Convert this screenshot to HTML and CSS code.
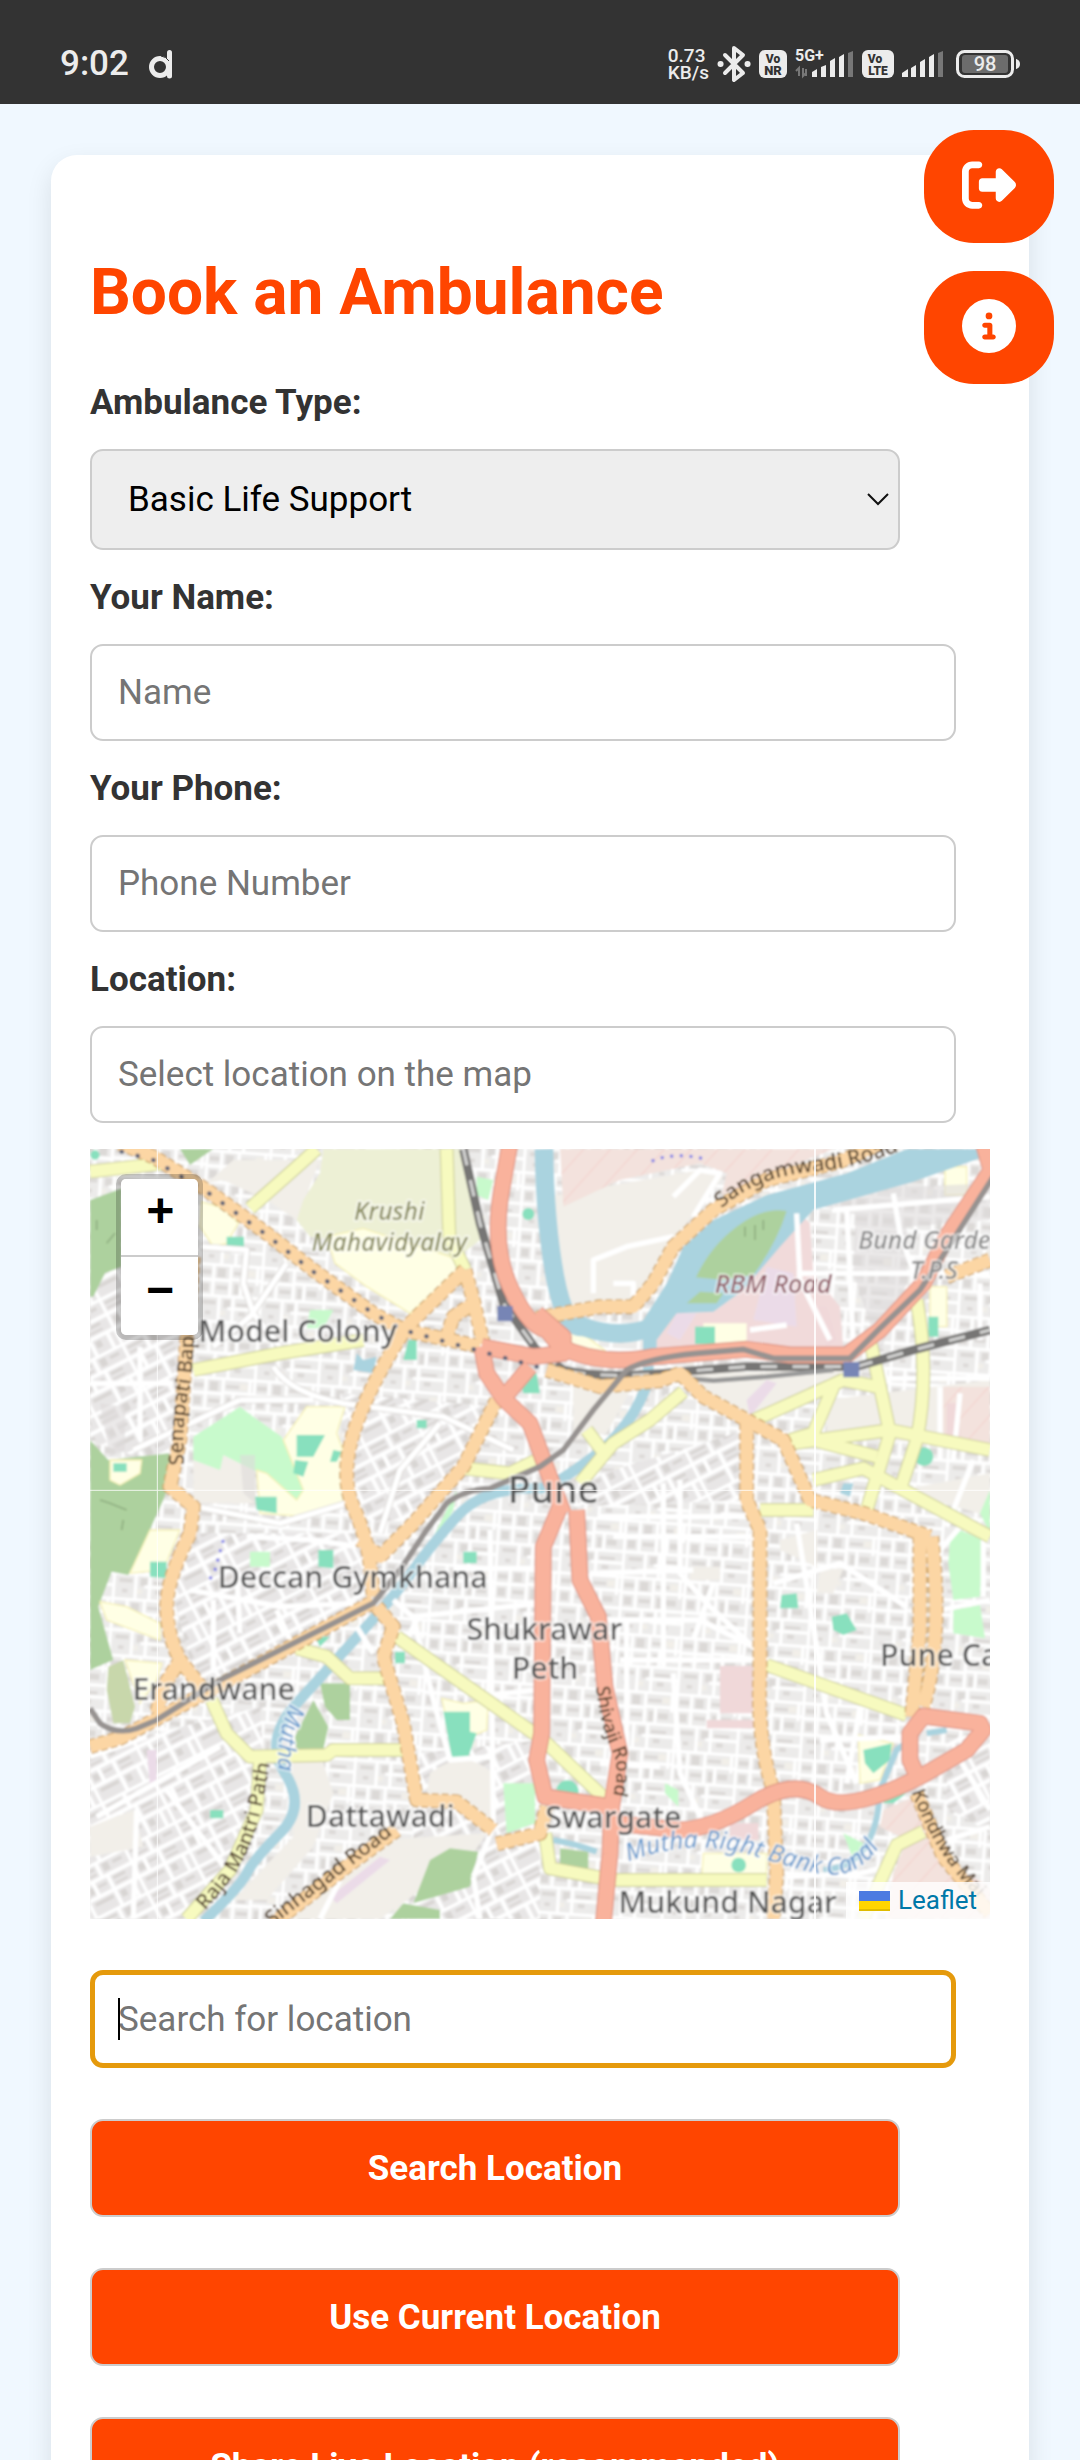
FILE: index.html
```html
<!DOCTYPE html>
<html lang="en">
<head>
<meta charset="utf-8">
<meta name="viewport" content="width=device-width, initial-scale=1">
<title>Book an Ambulance</title>
<link rel="stylesheet" href="styles.css">
</head>
<body>
<div class="screen">
  <header class="status">
    <div class="status-left">
      <span class="clock">9:02</span>
      <svg class="app-mark" width="24" height="30" viewBox="0 0 24 30" aria-hidden="true">
        <circle cx="11" cy="18" r="8.5" fill="none" stroke="#ececec" stroke-width="5"/>
        <path d="M20.500 3.500V27" stroke="#ececec" stroke-width="5" stroke-linecap="round"/>
        <path d="M12 7q5 .5 8 5" stroke="#333" stroke-width="1" fill="none"/>
      </svg>
    </div>
    <div class="status-right">
      <span class="speed">0.73<br>KB/s</span>
      <svg width="34" height="38" viewBox="0 0 34 38" fill="none" stroke="#ececec" stroke-width="4" stroke-linejoin="round" stroke-linecap="round" aria-hidden="true">
        <path d="M8 10L26 28L17 35V3L26 10L8 28"/>
        <path d="M3.500 19h.1M30.500 19h.1" stroke-width="6"/>
      </svg>
      <svg class="badge-icon" width="28" height="28" viewBox="0 0 28 28" aria-hidden="true">
        <rect width="28" height="28" rx="6" fill="#ececec"/>
        <text x="14" y="13" text-anchor="middle" font-size="12">Vo</text>
        <text x="14" y="25" text-anchor="middle" font-size="13">NR</text>
      </svg>
      <svg class="net" width="59" height="30" viewBox="0 0 59 30" aria-hidden="true">
        <text x="0" y="12" font-size="16">5G+</text>
        <path d="M4 27v-8l-3 3M8 19v8l3-3M11 20v7" stroke="#777" stroke-width="2" fill="none"/>
        <path d="M17 28v-5l5-3v8zM26 28v-10l5-2v12zM35 28V12l5-3v19zM44 28V8l5-3v23z" fill="#ececec"/>
        <path d="M53 28V4l5-2v26z" fill="#777"/>
      </svg>
      <svg class="badge-icon" width="32" height="28" viewBox="0 0 32 28" aria-hidden="true">
        <rect width="32" height="28" rx="6" fill="#ececec"/>
        <text x="13" y="13" text-anchor="middle" font-size="12">Vo</text>
        <text x="16" y="25" text-anchor="middle" font-size="12">LTE</text>
      </svg>
      <svg width="42" height="28" viewBox="0 0 42 28" aria-hidden="true">
        <path d="M0 27v-4l6-4v8zM9 27v-9l5-3v12zM18 27V12l5-3v18zM27 27V7l5-3v23z" fill="#ececec"/>
        <path d="M36 27V3l5-2v26z" fill="#777"/>
      </svg>
      <svg class="battery" width="66" height="28" viewBox="0 0 66 28" aria-hidden="true">
        <rect x="1.500" y="1.500" width="55" height="25" rx="7" fill="none" stroke="#ececec" stroke-width="3"/>
        <rect x="6" y="5" width="46" height="18" rx="3" fill="#6c6c6c"/>
        <path d="M60 9q4 1 4 5t-4 5z" fill="#ececec"/>
        <text x="29" y="21" text-anchor="middle" font-size="20">98</text>
      </svg>
    </div>
  </header>

  <main class="page">
    <div class="card">
      <h1>Book an Ambulance</h1>
      <form>
        <label for="type">Ambulance Type:</label>
        <div class="select-wrap">
          <select id="type"><option>Basic Life Support</option><option>Advanced Life Support</option></select>
          <svg class="chevron" width="22" height="14" viewBox="0 0 22 14" fill="none" stroke="#111" stroke-width="2" aria-hidden="true"><path d="M1 1l10 10L21 1"/></svg>
        </div>
        <label for="name">Your Name:</label>
        <input id="name" type="text" placeholder="Name">
        <label for="phone">Your Phone:</label>
        <input id="phone" type="tel" placeholder="Phone Number">
        <label for="location">Location:</label>
        <input id="location" type="text" placeholder="Select location on the map">

        <div class="map">
          <svg class="tiles" viewBox="30 27 2700 2310" preserveAspectRatio="xMidYMid slice" role="img" aria-label="Map of Pune">
            <defs>
              <filter id="soft" x="0" y="0" width="100%" height="100%"><feGaussianBlur stdDeviation="3"/></filter>
              <pattern id="blocks" width="190" height="170" patternUnits="userSpaceOnUse" patternTransform="rotate(4)">
                <rect width="190" height="170" fill="#ecebea"/>
                <path d="M12 20h30v14H12zM60 14h24v28H60zM108 22h40v10h-40zM14 62h22v24H14zM58 66h34v12H58zM112 60h14v30h-14zM140 64h30v18h-30zM20 112h40v12H20zM84 108h20v24H84zM122 116h46v10h-46zM30 144h16v10H30zM130 142h20v12h-20z" fill="#dcd9d7"/>
                <path d="M66 142h24v14H66zM150 16h24v20h-24z" fill="#f2efe9"/>
                <path d="M0 4H190M0 50H102M0 98H190M96 134H190M4 0V170M48 0V98M100 0V98M112 98V170M70 98V170M132 50V98M102 46H190M180 0V60" stroke="#fff" stroke-width="10" fill="none"/>
              </pattern>
              <pattern id="blocksB" width="170" height="150" patternUnits="userSpaceOnUse" patternTransform="rotate(-27)">
                <rect width="170" height="150" fill="#e8e6e6"/>
                <path d="M14 16h50v8H14zM14 34h50v6H14zM90 14h20v24H90zM124 18h30v10h-30zM16 66h20v20H16zM50 68h30v8H50zM104 62h40v10h-40zM104 82h40v6h-40zM20 112h60v10H20zM104 112h18v20h-18z" fill="#d8d5d3"/>
                <path d="M0 4H170M0 52H170M0 100H170M76 0V52M42 52V100M92 52V150M4 0V150M150 100V150" stroke="#fff" stroke-width="12" fill="none"/>
              </pattern>
              <pattern id="hatch" width="60" height="60" patternUnits="userSpaceOnUse" patternTransform="rotate(42)">
                <rect width="60" height="60" fill="#f3e2dd"/><path d="M0 0V60" stroke="#f3cfca" stroke-width="5"/>
              </pattern>
              <path id="p-senapati" d="M312 975Q305 860 325 760T345 480"/>
              <path id="p-sangam" d="M1925 205Q2030 110 2200 95T2560 -10"/>
              <path id="p-raja" d="M375 2312Q500 2180 530 2060T575 1840"/>
              <path id="p-sinhagad" d="M575 2360L930 2090"/>
              <path id="p-shivaji" d="M1548 1640Q1560 1760 1595 1830T1580 2020"/>
              <path id="p-kondhwa" d="M2495 1955Q2560 2140 2700 2280"/>
              <path id="p-mutha" d="M630 1690Q580 1800 598 1950"/>
              <path id="p-canal" d="M1645 2165Q1840 2090 2030 2150T2260 2205Q2370 2200 2430 2060"/>
              <path id="streets" d="M620 370L510 530L400 620M360 320L500 330L490 430L520 520L600 620M580 680Q630 760 790 790L1090 830L1300 930M480 780H700M160 930L480 780M350 1100L600 1150L800 1090M1080 850L960 990L900 1180"/>
              <path id="tertiary" d="M30 95L250 70M510 205L640 90L710 27M1100 27L1108 290L1155 390M340 690L600 640L850 600M1500 1030L1600 910L1710 840L1810 755M2000 850L2290 720L2390 740M2370 600L2430 880L2360 1110M2510 480Q2550 700 2510 900L2460 1050M2140 910L2430 870L2730 930M2130 900L2200 880L2260 740M2200 900L2390 950M2200 1020L2350 985L2730 1190M2040 1110H2200M1520 870L1580 950M650 1525L740 1550L810 1615H920M395 1680L440 1780L510 1850L740 1845L760 1830H980M540 1860L530 2010L450 2190L320 2337M950 1490L1390 1800L1590 1990M1395 2080L1410 2185L1600 2220H2060M2060 1575L2480 1725M2350 2337L2450 2115L2530 2075M1150 985L1290 1000L1390 950"/>
              <path id="rail" d="M1150 27L1200 250L1270 490L1370 630L1450 690Q1580 720 1800 695L2000 680H2330L2500 630L2730 570"/>
              <path id="secondary" d="M120 10L220 50L380 150L560 280L700 390L880 520L970 570L1200 620M340 350L320 600L300 900L270 1040L340 1100L330 1180Q260 1320 260 1400T300 1560L370 1650M300 1560L250 1640L230 1720M30 1820L120 1795L420 1635L880 1385M1155 390L980 560Q860 750 820 880T820 1100T870 1270L880 1370M1155 390L1180 480L1210 610M1100 590L1120 530L1180 490M1250 780L1150 980L1000 1150L900 1250L840 1200M890 1400L940 1460L910 1550L970 1750L1010 1980L1130 1985L1240 2070M1250 2112L1380 2080L1400 2000M1370 535L1560 500L1660 500L1720 430L1780 320L1900 210L2060 120L2280 65L2400 10M1400 690L1560 740L1740 722L1800 700L1870 770L2000 840L2110 900L2190 1080L2350 1120L2550 1190M2520 1190V1470L2495 1730M2555 1190Q2590 1500 2530 1700M2000 850V1080L2040 1170V1600Q2030 1800 2080 1950L2090 2200L2080 2337M2600 410L2730 360M950 2070L800 2180L580 2350M2510 1960L2590 2150L2730 2320"/>
              <path id="primary" d="M1290 10L1265 150Q1235 320 1290 440T1400 570L1440 620Q1560 680 1720 650L2000 628L2130 645H2300L2400 570L2530 430L2600 290L2740 80M1205 620L1360 650L1450 640L1450 590L1370 520M1205 620L1220 700L1270 775L1350 680M1270 775L1350 850L1390 960L1450 1120M1440 1100L1390 1220L1385 1780L1370 1860L1395 1970L1590 2000M1490 1110L1500 1320L1555 1430L1575 1640L1620 1840L1595 2000L1590 2140L1570 2350M1610 2050L1800 2070Q1900 2065 2020 1990T2220 1970T2530 1905L2660 1830L2710 1770L2700 1750L2530 1728L2490 1780V1860L2510 1905M2710 10L2730 80"/>
            </defs>
            <g filter="url(#soft)">
              <rect x="0" y="0" width="2760" height="2360" fill="url(#blocks)"/>
              <g fill="url(#blocksB)">
                <path d="M30 400L350 380L300 1000L30 900zM230 1180L840 1180L880 1380L350 1640zM30 1830L540 1700L560 2000L330 2337H30zM1020 1840L1380 1800V2337H980zM780 760L1250 800L1000 1140L810 1150z"/>
                <path d="M2600 1800L2730 1770V2080L2600 2000zM1500 1020L2000 870V1080L1480 1100z"/>
              </g>
              <g fill="#f2efe9">
                <path d="M1400 170L1860 90L1930 110L1780 300L1700 480L1460 530z"/>
                <path d="M340 960L430 940H520L530 1090L340 1090zM1790 700L2300 690L2000 830zM2240 780L2730 720V920L2240 890zM2460 1050L2730 1000V1130z"/>
                <path d="M630 1870L720 1840L760 1960L700 2120L560 2280H460L640 2090zM900 2100L1220 2080L1180 2140L900 2337H640zM1050 1900Q1150 1820 1240 1900V2040L1040 1960z"/>
                <path d="M1480 700H1680L1580 880L1480 900zM30 2060L160 2010L190 2120L30 2150zM2220 1290L2290 1285L2260 1360H2210zM1830 1280H1920V1320H1830zM2100 1200L2210 1170V1280L2100 1230z"/>
                <path d="M380 130L460 60H720L650 240L560 180L430 120z"/>
              </g>
              <!-- woods, parks, grounds -->
              <g fill="#add19e">
                <path d="M30 180L125 145V380L75 400L40 470H30zM300 27H400L330 75zM30 900L85 960L265 940L290 970L250 1080L205 1180L145 1305L95 1295L55 1400L100 1560L30 1590z"/>
                <path d="M1050 2160L1110 2125L1195 2135L1170 2240L1000 2290zM930 2337L970 2290L1080 2310V2337zM1440 2125L1525 2135V2185L1440 2180zM720 1630H810V1740H770L735 1700zM645 1790L700 1680L745 1760L730 1830L650 1830z"/>
              </g>
              <path d="M85 1580L130 1560L165 1700L150 1750H100L80 1650z" fill="#c8d7ab"/>
              <path d="M730 27H1160L1200 300L1110 370L1000 350L770 300L690 290L650 240L670 180L720 100z" fill="#edf0d5"/>
              <g fill="#c8facc">
                <path d="M340 890L480 800L520 830L605 890L675 1050L655 1085L560 1010L430 945L420 990L340 960zM690 510H760L730 565H680zM510 1235H570V1280H510zM1190 110L1240 120L1225 180L1190 165z"/>
                <path d="M1270 1930H1365V2050L1280 2080zM2610 1200L2640 1170L2710 1200L2700 1370L2620 1380L2605 1270zM2620 1410L2700 1395L2715 1495L2620 1480zM1755 1930L1795 1950V2000L1755 1960zM2290 2080L2350 2110L2320 2160zM2700 1120L2730 1050V1180zM1120 1110L1080 1180L1060 1190L1130 1050z"/>
              </g>
              <g fill="#ffffe5" stroke="#f5f0b5" stroke-width="4">
                <path d="M365 185L430 205L475 250L440 310L400 320L360 260zM740 290L850 265L1110 350L1150 380L990 520L860 440L765 370zM680 800H795L770 880L800 960L795 1090L680 1130L540 1120L530 990L560 1000L650 1080L670 1050L610 900z"/>
                <path d="M210 1170H300L250 1290L150 1300zM1085 1675L1150 1690L1225 1680L1220 1770L1170 1790L1095 1720zM1870 2140H2060V2210H1865zM1870 550H2000V610H1870zM2595 80H2660V165H2595zM2550 440H2600V560H2550zM2335 1785L2440 1810L2400 1920L2340 1930zM1430 570L1520 590L1600 650L1450 620z"/>
                <path d="M90 960L185 960L180 1000L120 1035L90 1020zM60 1385L140 1400L240 1450V1500L80 1440zM135 1560L245 1570L230 1620L180 1690z"/>
              </g>
              <g fill="#88e0be">
                <path d="M650 885L735 885L700 950L650 950zM645 960L685 965L670 1010L640 1000zM525 1070H590V1120L530 1110zM100 970H140V995H100zM440 290H492V325H440zM210 1265H260V1315L210 1310zM715 1230H760V1285L715 1280zM985 600H1010V660H970z"/>
                <path d="M1090 1715H1170V1775L1190 1780L1165 1850H1115zM1845 560H1905V612H1845zM2545 530H2575V590H2545zM2105 1365L2150 1360L2155 1405H2100zM2255 1430L2300 1420L2330 1470L2290 1485L2260 1470zM2350 1830L2435 1810L2430 1860L2380 1900L2355 1870zM1150 1235H1190V1270H1150zM945 1535H975V1570H945zM760 930L785 935L770 965H750zM1010 840H1040V865H1010zM1320 720L1370 700L1380 760L1330 760zM390 2010H430V2035H390zM705 1490H750L720 1520zM2410 1970L2480 1960L2440 1990H2410z"/>
                <circle cx="1462" cy="1955" r="34"/><circle cx="1976" cy="2175" r="22"/><circle cx="2532" cy="950" r="28"/><circle cx="45" cy="45" r="14"/><circle cx="1345" cy="222" r="18"/>
              </g>
              <path d="M1440 27H2260L1925 165L1940 100L1860 70L1620 120L1450 200z" fill="url(#hatch)"/>
              <path d="M2410 2010L2500 1970L2640 2190L2730 2240V2337H2420L2440 2200L2480 2100L2400 2060zM2590 740H2730V920L2590 880z" fill="url(#hatch)"/>
              <path d="M2170 230L2080 330L1990 450L1900 515L1770 520L1715 630H2290L2280 500L2200 400L2190 250z" fill="#f1dada"/>
              <path d="M2060 380L2140 400L2150 560L2020 540zM1790 520H1850L1800 600L1760 580zM200 1830H230V1930L210 1940zM750 2270L900 2150L930 2160L770 2290zM2000 780L2060 720L2090 730L2010 830z" fill="#ebdbe8"/>
              <path d="M1920 1578H2018V1720H1920zM1880 1740H2020V1765H1880zM2210 500H2240L2270 600L2240 620zM1950 2050H2035V2100H1950zM2600 790H2640V890H2600z" fill="#f0d8d9"/>
              <path d="M1870 550H2000V610H1870z" fill="#ffffe5"/><path d="M1845 560H1905V612H1845z" fill="#88e0be"/>
              <path d="M2330 150L2480 100V430L2400 640L2320 400zM2060 160L2730 130V240L2480 260zM480 945H525V1090L490 1060zM60 790L135 800V930L90 950z" fill="#dddbda" opacity=".6"/>
              <!-- river -->
              <g fill="none" stroke="#aad3df">
                <path d="M1392 27Q1395 250 1425 410T1510 560Q1620 600 1720 560" stroke-width="56"/>
                <path d="M1705 580V720Q1660 860 1540 950T1380 1045Q1210 1040 1130 1130T1000 1290T850 1470T650 1690T615 1900T600 2080T500 2200T370 2345" stroke-width="32"/>
                <path d="M1420 2100Q1480 2110 1550 2135M2230 2190Q2390 2180 2400 1950L2450 1830L2490 1800M2540 1780L2600 1770" stroke-width="18"/>
              </g>
              <path d="M1690 630V540L1760 430L1810 320L1900 240L2060 165L2300 100L2480 27H2700V55L2500 125L2200 210L2100 320L1990 450L1900 515L1790 520L1730 600V640zM830 640L850 660L890 650L880 700L820 690zM2290 1030H2320L2310 1070L2280 1060z" fill="#aad3df"/>
              <path d="M1848 412Q1890 320 1970 260T2120 213Q2090 310 2020 405L1930 420zM1820 490L1860 455L1930 460L1910 490z" fill="#add19e"/>
              <path d="M1995 290V260M2025 300V255M2050 270V240M50 270V240M80 310L105 280M60 1080L90 1090L140 1110M130 1140L125 1170" fill="none" stroke="#8fae80" stroke-width="5"/>
              <!-- residential streets -->
              <g fill="none" stroke-linejoin="round">
                <use href="#streets" stroke="#dad7d4" stroke-width="21"/>
                <use href="#streets" stroke="#fff" stroke-width="16"/>
              </g>
              <g fill="none" stroke="#fff" stroke-width="16" stroke-linejoin="round">
                <path d="M30 730H280M180 620V900M30 1850L200 1790M50 2030L420 1820M170 2010L160 2337M260 1950L440 2190M330 1350L600 1400L830 1390M500 1190L700 1200L830 1220M400 1380L400 1600M590 1410L630 1500M470 1290L480 1480"/>
                <path d="M1000 1430L1060 1680L1110 1860L1240 1850M1230 1170L1240 2060L1180 2210M1000 1430L1380 1390M1180 1670L1370 1650M1120 1285H1370M940 1380L1010 1440L980 1500M880 1540L830 1460"/>
                <path d="M1800 1020V1300L1890 1400L2040 1540M1600 1190H2030M1750 1030V1580M1900 1330L1840 1500M1560 1440H1860L2040 1530M1620 1560H2040M1640 1440V1880M1530 1300L1840 1290M1780 1600L1800 1900L1870 2050M1560 1130H2000M1560 1870L1740 1880M2080 1330L2280 1270L2480 1400M2150 1150L2210 1520L2240 1720L2330 1930M2220 1800L2480 1790M2580 1410L2730 1380M2300 1930L2340 1700M2710 1200V1370M2580 1230L2650 1150"/>
                <path d="M1540 460V360L1640 320L1780 290M1600 430H1660V490M1780 170L1860 90L1920 100L1840 230M2010 570L2120 555M2150 400H2730M2300 200L2320 620M2440 160L2460 280L2520 450M2260 210L2730 170M2700 430V600M2420 715H2730M2580 740V960M2640 760L2620 960M2680 960L2600 1160M2150 220L2160 420L2250 600M720 2337L780 2220M1200 2337L1180 2210M2120 2210L2340 2200L2420 2180M2600 2100L2730 2060M2640 1860L2730 2010"/>
              </g>
              <!-- tertiary roads -->
              <g fill="none" stroke-linejoin="round">
                <use href="#tertiary" stroke="#cfd19b" stroke-width="42"/>
                <use href="#tertiary" stroke="#f7fabf" stroke-width="35"/>
              </g>
              <!-- railway -->
              <g fill="none">
                <use href="#rail" stroke="#777674" stroke-width="26"/>
                <use href="#rail" stroke="#d0d0cf" stroke-width="10" stroke-dasharray="50 46"/>
                <path d="M1820 715L1900 722L2060 710L2260 690" stroke="#999" stroke-width="14"/>
              </g>
              <!-- secondary roads -->
              <g fill="none" stroke-linejoin="round">
                <use href="#secondary" stroke="#c79f62" stroke-width="45" stroke-dasharray="20 10"/>
                <use href="#secondary" stroke="#fcd6a4" stroke-width="38"/>
              </g>
              <!-- primary roads -->
              <g fill="none" stroke-linejoin="round">
                <use href="#primary" stroke="#dd9483" stroke-width="51"/>
                <use href="#primary" stroke="#f9b29c" stroke-width="44"/>
              </g>
              <!-- metro line -->
              <path d="M30 1705L60 1750Q110 1785 170 1765L230 1740L420 1620L880 1390L960 1290L1040 1170L1100 1090Q1150 1050 1230 1045L1380 980L1450 930L1540 810L1640 690Q1700 655 1850 640L1990 628L2080 655H2310L2400 565L2520 450L2600 330L2740 110" fill="none" stroke="#979391" stroke-width="17"/>
              <path d="M125 35L220 60L380 155L560 285L700 395L880 520L970 570L1370 680" fill="none" stroke="#5d6478" stroke-width="13" stroke-linecap="round" stroke-dasharray="1 48"/>
              <path d="M1715 64Q1780 35 1870 56M430 1200L405 1290L380 1335" stroke="#7a7ae6" stroke-width="9" stroke-dasharray="9 20" fill="none"/>
              <path d="M1252 498h46v46h-46zM2290 666h48v46h-48z" fill="#7785b5"/>
              <g class="roads">
                <text font-size="62"><textPath href="#p-senapati">Senapati Bapat</textPath></text>
                <text font-size="64"><textPath href="#p-sangam">Sangamwadi Road</textPath></text>
                <text font-size="62"><textPath href="#p-raja">Raja Mantri Path</textPath></text>
                <text font-size="64"><textPath href="#p-sinhagad">Sinhagad Road</textPath></text>
                <text font-size="58"><textPath href="#p-shivaji">Shivaji Road</textPath></text>
                <text font-size="58"><textPath href="#p-kondhwa">Kondhwa Main</textPath></text>
              </g>
              <g class="water">
                <text font-size="72"><textPath href="#p-mutha">Mutha</textPath></text>
                <text font-size="74"><textPath href="#p-canal">Mutha Right Bank Canal</textPath></text>
              </g>
              <g class="areas">
                <text x="928" y="240" font-size="74" text-anchor="middle" fill="#8a8c5e">Krushi</text>
                <text x="928" y="333" font-size="74" text-anchor="middle" fill="#8a8c5e">Mahavidyalay</text>
                <text x="2080" y="458" font-size="76" text-anchor="middle" fill="#93616b">RBM Road</text>
                <text x="2335" y="327" font-size="74" fill="#8b8b8b">Bund Garden</text>
                <text x="2562" y="417" font-size="74" text-anchor="middle" fill="#8b8b8b">T.P.S</text>
              </g>
              <g class="places" text-anchor="middle">
                <text x="653" y="605" font-size="91">Model Colony</text>
                <text x="1420" y="1088" font-size="112" fill="#444">Pune</text>
                <text x="818" y="1345" font-size="91">Deccan Gymkhana</text>
                <text x="401" y="1680" font-size="91">Erandwane</text>
                <text x="1393" y="1500" font-size="91">Shukrawar</text>
                <text x="1395" y="1617" font-size="91">Peth</text>
                <text x="901" y="2062" font-size="91">Dattawadi</text>
                <text x="1600" y="2063" font-size="91">Swargate</text>
                <text x="1943" y="2320" font-size="91">Mukund Nagar</text>
                <text x="2400" y="1578" font-size="91" text-anchor="start">Pune Camp</text>
              </g>
            </g>
            <path d="M232 27V2337M30 1051H2730" stroke="#fff" stroke-width="3" opacity=".8"/>
            <path d="M2205 27V2337" stroke="#fff" stroke-width="5"/>
          </svg>
          <div class="zoom">
            <button type="button" aria-label="Zoom in">+</button>
            <button type="button" aria-label="Zoom out">−</button>
          </div>
          <div class="attribution">
            <svg width="31" height="20" viewBox="0 0 31 20" aria-hidden="true"><path fill="#4c7be1" d="M0 0h31v10H0z"/><path fill="#ffd500" d="M0 10h31v10H0z"/><path fill="#e0bc00" d="M0 18h31v2H0z"/></svg>
            <a href="#leaflet">Leaflet</a>
          </div>
        </div>

        <div class="search-wrap">
          <input class="search" type="text" placeholder="Search for location" aria-label="Search for location">
        </div>
        <button class="action" type="button">Search Location</button>
        <button class="action" type="button">Use Current Location</button>
        <button class="action" type="button">Share Live Location (recommended)</button>
      </form>
    </div>
  </main>

  <nav class="floating" aria-label="Quick actions">
    <button type="button" aria-label="Log out">
      <svg width="54" height="54" viewBox="0 0 512 512" fill="#fff" aria-hidden="true"><path d="M377.900 105.900L500.700 228.700c7.200 7.200 11.300 17.100 11.300 27.300s-4.100 20.100-11.300 27.300L377.900 406.100c-6.400 6.400-15 9.900-24 9.900c-18.700 0-33.900-15.200-33.900-33.900l0-62.100-128 0c-17.700 0-32-14.300-32-32l0-64c0-17.700 14.300-32 32-32l128 0 0-62.100c0-18.700 15.200-33.900 33.900-33.900c9 0 17.600 3.600 24 9.900zM160 96L96 96c-17.700 0-32 14.300-32 32l0 256c0 17.700 14.300 32 32 32l64 0c17.700 0 32 14.300 32 32s-14.300 32-32 32l-64 0c-53 0-96-43-96-96L0 128C0 75 43 32 96 32l64 0c17.700 0 32 14.300 32 32s-14.300 32-32 32z"/></svg>
    </button>
    <button type="button" aria-label="Information">
      <svg width="54" height="54" viewBox="0 0 512 512" fill="#fff" aria-hidden="true"><path d="M256 512A256 256 0 1 0 256 0a256 256 0 1 0 0 512zM216 336l24 0 0-64-24 0c-13.300 0-24-10.700-24-24s10.700-24 24-24l48 0c13.300 0 24 10.700 24 24l0 88 8 0c13.300 0 24 10.700 24 24s-10.700 24-24 24l-80 0c-13.300 0-24-10.700-24-24s10.700-24 24-24zm40-208a32 32 0 1 1 0 64 32 32 0 1 1 0-64z"/></svg>
    </button>
  </nav>
</div>
</body>
</html>
```
FILE: styles.css
```css
* { box-sizing: border-box; }

body {
  margin: 0;
  background: #f0f8ff;
  color: #333;
  font-family: Roboto, "Liberation Sans", sans-serif;
  font-size: 35px;
}

button, input, select { font: inherit; }

.screen {
  position: relative;
  height: 100vh;
  display: flex;
  flex-direction: column;
  overflow: hidden;
}

/* Status bar */
.status {
  flex: none;
  height: 104px;
  padding: 24px 58px 0 60px;
  display: flex;
  justify-content: space-between;
  align-items: center;
  background: #333;
  color: #ececec;
}
.status-left { display: flex; align-items: center; gap: 20px; }
.clock { font-weight: 500; line-height: 40px; }
.status-right { display: flex; align-items: center; gap: 8px; }
.speed { font-size: 19px; line-height: 17px; font-weight: 500; }
.status text { font-family: Roboto, sans-serif; font-weight: 900; fill: #333; }
.status .net text { font-weight: 700; fill: #ececec; }
.status .battery text { font-weight: 500; fill: #ececec; }
.battery { margin-left: 4px; }

/* Page */
.page {
  flex: 1;
  min-height: 0;
  padding: 51px;
  overflow-y: auto;
  scrollbar-width: none;
}
.card {
  padding: 100px 39px 39px;
  background: #fff;
  border-radius: 26px;
  box-shadow: 0 10px 26px rgba(0, 0, 0, .1);
}
h1 {
  margin: 0 0 52px;
  color: #ff4500;
  font-size: 64px;
  line-height: 75px;
  font-weight: 700;
}
label {
  display: block;
  margin: 27px 0 25px;
  font-weight: 700;
  line-height: 42px;
}

input, select, .action {
  display: block;
  border: 2px solid #ccc;
  border-radius: 13px;
}
input {
  box-sizing: content-box;
  width: 90%;
  height: 93px;
  padding: 0 26px;
  background: #fff;
  color: #000;
}
input::placeholder { color: #757575; opacity: 1; }

.select-wrap { position: relative; width: 90%; }
select {
  width: 100%;
  height: 101px;
  padding: 0 36px;
  appearance: none;
  background: #eee;
  color: #000;
}
.chevron {
  position: absolute;
  right: 11px;
  top: 50%;
  translate: 0 -50%;
  pointer-events: none;
}

/* Map */
.map {
  position: relative;
  height: 770px;
  margin: 26px 0 51px;
  overflow: hidden;
}
.tiles { display: block; width: 100%; height: 100%; }
.tiles text {
  font-family: "Noto Sans", sans-serif;
  paint-order: stroke;
  stroke: rgba(255, 255, 255, .6);
  stroke-width: 10px;
  stroke-linejoin: round;
}
.tiles .places text { fill: #555; font-weight: 500; }
.tiles .areas text { font-style: italic; font-weight: 500; }
.tiles .roads text { fill: #54432f; stroke: none; font-weight: 500; }
.tiles .water text { fill: #6699cc; font-style: italic; }

.zoom {
  position: absolute;
  left: 26px;
  top: 25px;
  width: 87px;
  border: 5px solid rgba(0, 0, 0, .2);
  border-radius: 10px;
  background-clip: padding-box;
}
.zoom button {
  display: block;
  width: 100%;
  height: 78px;
  padding: 0 0 6px 2px;
  border: 0;
  background: #fff;
  color: #000;
  font: bold 48px/60px "Liberation Mono", monospace;
}
.zoom button:first-child {
  border-bottom: 2px solid #ccc;
  border-radius: 5px 5px 0 0;
}
.zoom button:last-child { border-radius: 0 0 5px 5px; }

.attribution {
  position: absolute;
  right: 0;
  bottom: 0;
  height: 37px;
  padding: 0 13px;
  display: flex;
  align-items: center;
  gap: 8px;
  background: rgba(255, 255, 255, .8);
  font-size: 26px;
  line-height: 37px;
}
.attribution a { color: #0078a8; text-decoration: none; }

/* Search */
.search-wrap { position: relative; }
.search {
  height: 88px;
  padding: 0 23px;
  border: 5px solid #e59a0c;
}
.search-wrap::after {
  content: "";
  position: absolute;
  left: 28px;
  top: 28px;
  width: 2px;
  height: 42px;
  background: #000;
}
.action {
  width: 90%;
  height: 98px;
  margin-top: 51px;
  background: #ff4500;
  color: #fff;
  font-weight: 700;
}

/* Floating buttons */
.floating {
  position: absolute;
  right: 26px;
  top: 130px;
  display: flex;
  flex-direction: column;
  gap: 28px;
}
.floating button {
  width: 130px;
  height: 113px;
  padding: 0 0 4px;
  display: grid;
  place-items: center;
  border: 0;
  border-radius: 50px;
  background: #ff4500;
}
```
